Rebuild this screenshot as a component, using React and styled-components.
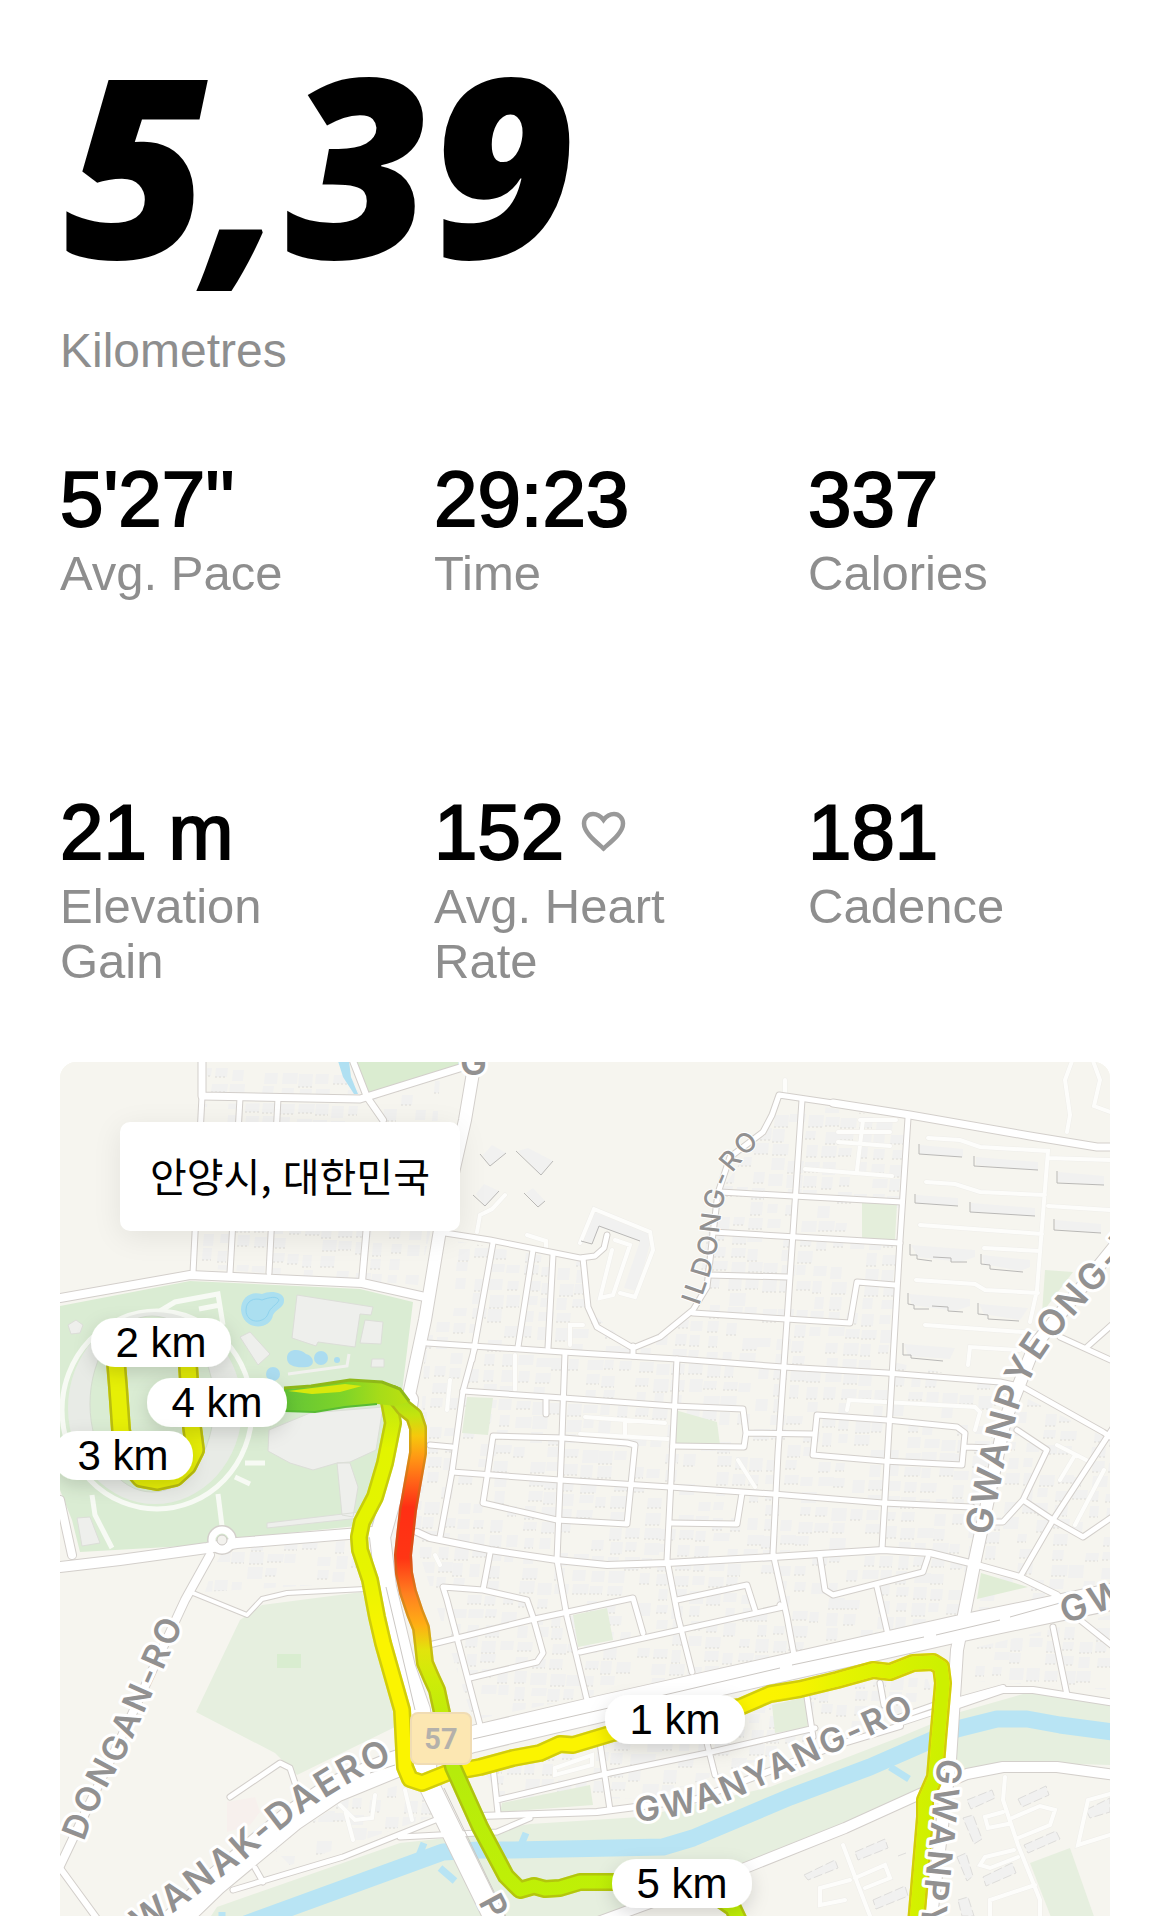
import React from "react";
import styled, { createGlobalStyle } from "styled-components";

const GlobalStyle = createGlobalStyle`
  * { box-sizing: border-box; }
  body {
    margin: 0;
    background: #fff;
    color: #000;
    font-family: "Liberation Sans", Arial, sans-serif;
  }
`;

const Page = styled.main`
  display: flex;
  flex-direction: column;
  padding: 17px 60px 0;
`;

const Hero = styled.section`
  display: flex;
  flex-direction: column;
  gap: 16px;
  margin-bottom: 74px;
`;

const Distance = styled.h1`
  margin: 0;
  padding-left: 4px;
  font: italic 800 250px/290px "Open Sans", sans-serif;
`;

const Label = styled.span`
  font-size: 48px;
  line-height: 55px;
  color: #8e8e8e;
`;

const Stats = styled.dl`
  display: grid;
  grid-template-columns: repeat(3, minmax(0, 1fr));
  column-gap: 72px;
  row-gap: 184px;
  margin: 0 0 73px;
`;

const Stat = styled.div`
  display: flex;
  flex-direction: column-reverse;
  justify-content: flex-end;
`;

const StatLabel = styled(Label)`
  font-size: 49px;
`;

const Value = styled.dd`
  display: flex;
  align-items: center;
  gap: 17px;
  margin: 0;
  font-size: 78px;
  line-height: 94px;
  white-space: pre;
  -webkit-text-stroke: 2px #000;
`;

const MapCard = styled.section`
  position: relative;
  aspect-ratio: 1050 / 854;
  overflow: hidden;
  border-radius: 16px 16px 0 0;
  background: #f6f5ef;
`;

const MapDrawing = styled.svg`
  display: block;
  width: 100%;
  height: 100%;
`;

const Place = styled.p`
  position: absolute;
  top: 60px;
  left: 60px;
  margin: 0;
  padding: 26px 30px 28px;
  border-radius: 10px;
  background: #fff;
  box-shadow: 0 6px 30px rgba(0, 0, 0, 0.08);
  font: 40px/55px "Noto Sans CJK KR", sans-serif;
`;

const RoadName = styled.text`
  font-family: Inter, Roboto, sans-serif;
  font-size: ${(p) => p.$size || 34}px;
  font-weight: ${(p) => p.$weight || 600};
  letter-spacing: 3px;
  fill: #929191;
  stroke: #fff;
  stroke-width: ${(p) => (p.$weight ? 2 : 6)}px;
  stroke-linejoin: round;
  paint-order: stroke;
`;

const PinText = styled.text`
  font-family: "Liberation Sans", Arial, sans-serif;
  font-size: 42px;
  text-anchor: middle;
`;

const ShieldText = styled.text`
  font-family: Roboto, sans-serif;
  font-size: 29px;
  font-weight: 700;
  text-anchor: middle;
  fill: #b4b1ab;
`;

/* Pseudo-random footprint blocks for the residential streets. */
function buildFootprints() {
  let seed = 7;
  const rnd = () => {
    seed = (seed * 16807) % 2147483647;
    return seed / 2147483647;
  };
  let fills = "";
  let edges = "";
  for (let row = 0; row < 56; row += 1) {
    for (let col = 0; col < 66; col += 1) {
      const keep = rnd();
      const w = Math.round(9 + rnd() * 7);
      const h = Math.round(8 + rnd() * 5);
      const x = Math.round(60 + col * 17 + rnd() * 3 - row);
      const y = Math.round(1060 + row * 15 + rnd() * 2 + col * 0.9);
      if (keep > 0.25) {
        fills += `M${x} ${y}h${w}l-1 ${h}h-${w}z`;
        if (keep > 0.5) edges += `M${x - 1} ${y + h}h${w}`;
      }
    }
  }
  return { fills, edges };
}
const footprints = buildFootprints();

const URBAN =
  "M450 1240L580 1262L588 1310L633 1347L693 1315L714 1200L760 1135L780 1100L905 1120L893 1362L1000 1385L1110 1440V1590L473 1720L415 1540L425 1345Z" +
  "M207 1064H345L360 1094H207ZM202 1104L362 1102L440 1075L432 1225L418 1285L200 1268Z" +
  "M212 1570L225 1548L365 1540V1582L205 1592ZM965 1650L1110 1615V1690L960 1680ZM480 1762L925 1672L935 1700L650 1798L500 1800Z" +
  "M275 1850L300 1830L345 1800L400 1785L445 1812L290 1865Z";

const GREENS = [
  ["M354 1061H463V1065L367 1096Z", "#daecd0"],
  ["M60 1306L190 1281L360 1289L413 1302L401 1400L376 1524L240 1538L203 1545L80 1552L72 1520L60 1490Z", "#daecd3"],
  ["M240 1620L262 1605L362 1592L385 1660L395 1727L297 1775L275 1753L196 1712Z", "#e6efdf"],
  ["M277 1654h24v14h-24z", "#d9edd0"],
  ["M467 1397L493 1398L488 1435L462 1433Z", "#e4eedb"],
  ["M675 1410L717 1422L720 1445L675 1443Z", "#e4eedb"],
  ["M862 1203H897L895 1240H862Z", "#e4eedb"],
  ["M1045 1270L1073 1272L1042 1313Z", "#e4eedb"],
  ["M981 1573L1028 1587L977 1599Z", "#e0edd6"],
  ["M573 1615L607 1608L613 1640L578 1647Z", "#e4eedb"],
  ["M772 1705L805 1697L808 1728L775 1733Z", "#e4eedb"],
  ["M502 1803L590 1785L593 1805L500 1812Z", "#e4eedb"],
  ["M205 1925L217 1907L400 1843L447 1838L530 1824L640 1817L770 1787L900 1737L960 1712L1030 1692L1110 1705V1765L1003 1762L920 1790L770 1858L600 1925Z", "#e6efdf"],
  ["M1030 1863L1070 1848L1097 1925H1054Z", "#e6efdf"],
];
const PARK_LAYER = GREENS.slice(0, 4).concat(GREENS.slice(12));
const POCKET_PARKS = GREENS.slice(4, 12);

const GREY_SHAPES =
  "M297 1295L373 1307L371 1315L360 1314L355 1347L318 1342L316 1346L292 1338ZM365 1320L383 1322L381 1344L360 1343Z" +
  "M269 1430L310 1413L383 1407L376 1450L350 1462L337 1463L313 1470L290 1463L268 1451ZM337 1463H350L358 1487L353 1517L342 1515Z" +
  "M267 1523L360 1512V1518L267 1528ZM240 1337L250 1332L270 1354L258 1365ZM372 1359H384V1367H371Z" +
  "M77 1518L90 1517L100 1543L82 1546ZM68 1325L76 1320L83 1325L80 1333L71 1334Z";

const APARTMENTS =
  "M919 1144V1154L962 1157M974 1156V1166L1038 1170M1057 1171V1183L1104 1185M915 1194V1203L958 1206M970 1202V1212L1035 1216M1054 1219V1230L1101 1233" +
  "M910 1244V1255H917V1259L932 1261M933 1257L951 1258V1262H967M981 1254V1264L990 1265V1269L1023 1272M908 1293V1304L914 1305V1309H929M932 1306L948 1307V1311L963 1312M978 1303V1314L988 1315V1319L1019 1321" +
  "M903 1343V1355H911V1358L943 1361M480 1154L490 1166L506 1153M516 1151L541 1175L553 1161M473 1195L485 1206L499 1191M524 1193L538 1207L545 1201M581 1241L592 1244L599 1226L640 1241";

const TOWERS =
  "M967 1800L992 1790L995 1798L971 1809ZM1018 1799L1046 1786L1049 1795L1022 1807ZM963 1818L973 1815L982 1839L974 1844ZM855 1852L885 1839L888 1848L858 1860ZM804 1875L835 1860L838 1868L808 1880Z" +
  "M1024 1845L1056 1831L1060 1839L1028 1853ZM983 1877L1012 1863L1016 1873L986 1886ZM957 1857L966 1853L973 1876L967 1881ZM873 1900L905 1886L908 1896L876 1909ZM898 1856L906 1853M1086 1810L1110 1798V1812L1090 1818ZM958 1900L968 1897L974 1916H962Z";

const APARTMENT_FILLS =
  "M920 1145L963 1149V1157L920 1154ZM976 1157L1038 1162V1170L976 1165ZM1058 1172L1104 1176V1185L1058 1182ZM916 1195L958 1198V1206L916 1203ZM971 1203L1035 1208V1216L971 1212ZM1055 1220L1101 1224V1233L1055 1229Z" +
  "M911 1245L975 1250V1257L960 1262L918 1257ZM982 1255L1030 1260V1267L1020 1271L984 1264ZM909 1294L970 1299V1306L955 1311L912 1305ZM979 1304L1028 1308L1020 1320L984 1314ZM904 1344L955 1348L950 1359L908 1356Z" +
  "M483 1155L492 1145L506 1153L490 1166ZM518 1151L528 1148L553 1161L541 1175ZM476 1194L484 1184L499 1191L485 1206ZM526 1193L533 1188L545 1201L538 1207Z" +
  "M582 1240L594 1212L648 1233L650 1244L637 1291L624 1288L640 1241L600 1227L592 1243Z";

const ALLEYS =
  "M928 1138L960 1140L980 1147L1048 1151L1037 1290L1030 1322M926 1182L955 1184L980 1192L1045 1195M920 1225L1042 1234M984 1248L1040 1251M916 1280L975 1284L985 1290L1038 1293M925 1325L1035 1333M968 1365L970 1347L1020 1350" +
  "M1048 1158L1110 1160M1048 1206L1110 1210M1067 1132L1070 1115L1065 1080L1072 1061M1093 1061L1100 1080L1094 1106L1110 1112M863 1120L857 1170M838 1132H890M838 1142L890 1146M805 1169L892 1176M860 1120H896M785 1080V1095" +
  "M477 1232L480 1215L492 1209L505 1195M527 1235L546 1241V1250M615 1240L630 1245L613 1295L600 1298L612 1250M580 1243L594 1209L650 1232L653 1250L635 1297L620 1293M583 1325H570V1345M847 1410L849 1400L975 1407L980 1412L975 1430M515 1355V1390M450 1380L447 1410M585 1417L665 1423M580 1434L668 1439M625 1420V1436M738 1460L755 1487" +
  "M435 1555L440 1565M340 1805L355 1820L372 1818L375 1795M345 1810L353 1840M405 1790L412 1820M555 1768V1775L592 1765V1755ZM1057 1445L1090 1462M1075 1455L1060 1480M1104 1470L1075 1525M1005 1777L1003 1800L1018 1845L1040 1900V1916M1018 1838L1050 1825L1055 1810L1040 1806L1012 1818M1003 1812L985 1817L988 1828L1008 1824M1014 1850L985 1857L980 1865L990 1868L1018 1857M1110 1794L1088 1800L1078 1845L1110 1835" +
  "M843 1845L860 1890L870 1916M855 1878L885 1865L890 1878L865 1888M850 1880L820 1888V1905L845 1900M1035 1885L990 1900V1916";

/* Each road: [width, path]. */
const ROADS = [
  [5, "M202 1096L193 1273M240 1098L230 1273M278 1098L269 1273"],
  [6, "M353 1061L367 1097L383 1120M367 1225L362 1282"],
  [7, "M202 1055V1096L360 1099L463 1067L470 1061"],
  [8, "M60 1298L190 1275L362 1283L425 1297"],
  [5, "M493 1243L472 1360M475 1347L463 1391L452 1472L440 1537M533 1250L518 1347M553 1255L548 1348"],
  [5, "M583 1258L588 1307L597 1327L633 1348L660 1337L693 1310L707 1287L713 1233L718 1193L730 1157L763 1132L772 1115L779 1095L833 1103M633 1346V1356"],
  [5, "M445 1233L490 1240L580 1258L595 1256L604 1248L607 1235"],
  [7, "M833 1103L910 1115L1030 1136L1097 1147H1115"],
  [5, "M720 1192L902 1202M713 1232L900 1243M709 1275L787 1277M693 1313L850 1323L857 1282L895 1285"],
  [5, "M427 1343L563 1352L677 1359L783 1367L887 1373L1000 1382L1023 1387L1103 1432L1115 1440"],
  [5, "M463 1391L563 1398L673 1406L743 1409L746 1433L744 1447L673 1446M746 1433L813 1434"],
  [5, "M817 1415L887 1420L957 1427L965 1433L962 1465L883 1461L813 1455ZM966 1447L990 1448"],
  [5, "M483 1503L557 1520L627 1524L635 1445L627 1443L563 1438L493 1436L487 1477ZM546 1400V1414"],
  [5, "M430 1445L452 1447M452 1472L560 1480L670 1487L773 1494L883 1503L972 1507M742 1493L737 1524L670 1523"],
  [5, "M565 1353L562 1437L557 1560L567 1617L587 1700M677 1359L667 1560L678 1617L692 1672"],
  [5, "M802 1100L793 1233L778 1453L773 1553L787 1617L794 1655M908 1118L900 1240L893 1360L882 1549"],
  [6, "M417 1532L430 1538L490 1550L557 1560L607 1565L667 1563L773 1557L883 1550L930 1553L970 1563L1020 1577L1057 1595"],
  [5, "M490 1553L483 1590M480 1725L447 1600L443 1587L483 1590L527 1600L533 1617L543 1653L537 1662L470 1678"],
  [5, "M425 1646L530 1620L563 1613L633 1598L643 1633M580 1652L680 1630L783 1607L780 1605M677 1600L747 1585L755 1610"],
  [5, "M820 1557L825 1590L833 1595L923 1572L928 1557M877 1587L888 1635"],
  [5, "M1115 1425L1053 1520L1020 1577M1023 1500L1053 1520L1083 1537L1115 1515M1017 1430L1047 1450L1023 1500L1003 1522H990M1060 1337L1115 1362M1087 1347L1115 1322"],
  [5, "M1053 1627L1067 1695M1080 1620L1115 1648"],
  [6, "M950 1708L1003 1690L1033 1690L1115 1703M960 1700L1003 1688"],
  [5, "M897 1724L955 1705M897 1718L940 1703"],
  [6, "M480 1816L597 1812L697 1799L837 1745L900 1726"],
  [5, "M493 1767L498 1813M497 1800L610 1773L707 1753L815 1728M600 1743L610 1810M707 1743L715 1775M807 1697L813 1737M880 1683L884 1705"],
  [5, "M233 1890L343 1857L443 1817M400 1837L497 1832L530 1818M255 1868L263 1882"],
  [5, "M230 1797L280 1763L290 1768L298 1792"],
  [6, "M60 1868L98 1920"],
  [10, "M60 1567L120 1560L207 1548L237 1543L385 1531"],
  [8, "M60 1500L72 1555M210 1555L185 1600L120 1740L58 1870"],
  [4, "M193 1593L247 1615L262 1599L287 1593L365 1589"],
  [10, "M590 1925L740 1870L845 1828L920 1794L967 1774L1003 1767H1057L1115 1775"],
  [12, "M476 1055L465 1120L440 1230L425 1320L408 1400L395 1487"],
  [20, "M408 1400L394 1487L380 1537L386 1587L405 1667L420 1710L428 1783L500 1930"],
  [12, "M1120 1240L1035 1345L1005 1420L975 1560L957 1650L950 1760L930 1925"],
  [26, "M160 1935L215 1882L292 1818L335 1789L396 1764L473 1739L600 1709L770 1671L957 1629L1120 1595"],
];

const ROUTE_OUT =
  "M310 1401L343 1395L377 1391L393 1394L404 1408L414 1416L418 1428V1453L412 1487L408 1510L405 1537L403 1555L404 1573L408 1592L415 1613L421 1628L423 1645L425 1663L431 1677L437 1690L442 1713L453 1767L480 1827L506 1876L520 1890L534 1886L545 1889L560 1888L580 1882L613 1882L700 1885L733 1908L748 1940";
const ROUTE_BACK =
  "M388 1396L393 1423L385 1463L375 1497L362 1522L359 1537L360 1550L370 1580L377 1617L383 1643L402 1710L405 1767L410 1779L422 1783L447 1773L480 1767L513 1758L540 1753L560 1744L573 1745L613 1733L680 1716L740 1707L770 1694L800 1689L837 1680L873 1670L890 1672L913 1663L933 1662L941 1667L943 1683L938 1740L935 1777L925 1800L925 1817L918 1900L915 1935";
const ROUTE_TRACK = "M115 1350L118 1387L121 1430L128 1463L141 1478L157 1481L175 1477L187 1466L195 1450L192 1427L187 1350";

const PINS = [
  ["1 km", 675, 1719],
  ["5 km", 682, 1883],
  ["2 km", 161, 1342],
  ["4 km", 217, 1402],
  ["3 km", 123, 1455],
];

const STATS = [
  ["5'27''", "Avg. Pace"],
  ["29:23", "Time"],
  ["337", "Calories"],
  ["21 m", "Elevation Gain"],
  ["152", "Avg. Heart Rate", true],
  ["181", "Cadence"],
];

function Heart() {
  return (
    <svg width="45" height="42" viewBox="0 0 45 42" fill="none" stroke="#999" strokeWidth="4.5" strokeLinejoin="miter" aria-hidden="true">
      <path d="M22.500 37.500C16 31.500 3 22 3 12.500C3 7 7 3 12 3C16.500 3 19.500 5 22.500 9C25.500 5 28.500 3 33 3C38 3 42 7 42 12.500C42 22 29 31.500 22.500 37.500Z" />
    </svg>
  );
}

function Route({ d, paint, edge, width = 18 }) {
  return (
    <g fill="none" strokeLinejoin="round">
      <path d={d} stroke={paint} strokeWidth={width} />
      <path d={d} stroke={edge} strokeWidth={width} />
      <path d={d} stroke={paint} strokeWidth={width - 5} />
    </g>
  );
}

function RouteMap() {
  return (
    <MapDrawing viewBox="60 1062 1050 854" preserveAspectRatio="xMidYMid slice" role="img" aria-label="Route map">
      <defs>
        <clipPath id="urban"><path d={URBAN} /></clipPath>
        <linearGradient id="out" gradientUnits="userSpaceOnUse" x1="0" y1="1390" x2="0" y2="1900">
          <stop offset="0" stopColor="#9ade1c" />
          <stop offset="0.05" stopColor="#c4e40e" />
          <stop offset="0.09" stopColor="#f6c80c" />
          <stop offset="0.13" stopColor="#ff9a14" />
          <stop offset="0.18" stopColor="#ff6318" />
          <stop offset="0.23" stopColor="#ff2f14" />
          <stop offset="0.33" stopColor="#ff3514" />
          <stop offset="0.4" stopColor="#ff8020" />
          <stop offset="0.46" stopColor="#ffae14" />
          <stop offset="0.51" stopColor="#e2e40c" />
          <stop offset="0.57" stopColor="#cdec08" />
          <stop offset="0.7" stopColor="#b4ea0c" />
          <stop offset="1" stopColor="#c0f006" />
        </linearGradient>
        <linearGradient id="start" gradientUnits="userSpaceOnUse" x1="285" y1="0" x2="405" y2="0">
          <stop offset="0" stopColor="#63c536" />
          <stop offset="0.5" stopColor="#80d428" />
          <stop offset="0.8" stopColor="#a8dc18" />
          <stop offset="1" stopColor="#b8e010" />
        </linearGradient>
        <linearGradient id="back" gradientUnits="userSpaceOnUse" x1="0" y1="1400" x2="0" y2="1640">
          <stop offset="0" stopColor="#c0e810" />
          <stop offset="0.2" stopColor="#e2f400" />
          <stop offset="0.7" stopColor="#e6f400" />
          <stop offset="1" stopColor="#fbf400" />
        </linearGradient>
        <linearGradient id="east" gradientUnits="userSpaceOnUse" x1="760" y1="0" x2="940" y2="0">
          <stop offset="0" stopColor="#fff200" stopOpacity="0" />
          <stop offset="0.4" stopColor="#e8f400" />
          <stop offset="1" stopColor="#cdf000" />
        </linearGradient>
        <filter id="lift" x="-30%" y="-60%" width="160%" height="240%">
          <feDropShadow dx="0" dy="6" stdDeviation="9" floodOpacity="0.14" />
        </filter>
      </defs>

      <rect x="60" y="1062" width="1050" height="856" fill="#f6f5ef" />
      {PARK_LAYER.map(([d, fill]) => <path key={d} d={d} fill={fill} />)}

      <g clipPath="url(#urban)">
        <path d={footprints.fills} fill="#f1f1f0" />
        <path d={footprints.edges} fill="none" stroke="#dddcd8" strokeDasharray="2 2" />
      </g>
      {POCKET_PARKS.map(([d, fill]) => <path key={d} d={d} fill={fill} />)}
      <path d="M227 1802L255 1797L260 1812L250 1825L227 1832Z" fill="#f7f0ed" />

      <g fill="none" stroke="#f7faf4" strokeWidth="5">
        <ellipse cx="157" cy="1410" rx="95" ry="99" />
        <path d="M160 1311L175 1302L218 1294L223 1325M199 1309L220 1305M92 1495L95 1515L112 1548M218 1494L222 1526M245 1463H265M235 1477L250 1484" />
      </g>
      <ellipse cx="155" cy="1408" rx="87" ry="96" fill="#e8ebe6" />
      <ellipse cx="152" cy="1404" rx="62" ry="88" fill="#daecd3" stroke="#d4dccf" />
      <path d={GREY_SHAPES} fill="#eeefec" stroke="#dcded8" strokeWidth="1" />
      <path d="M288 1374L347 1366L349 1354" fill="none" stroke="#f1f1ee" strokeWidth="3" />

      <path d="M338 1061H349L351 1077L358 1094H354L343 1077Z" fill="#b0e0f2" />
      <path d="M241 1310C241 1296 252 1291 262 1294C270 1290 283 1292 284 1299C285 1308 276 1309 273 1315C271 1330 243 1332 241 1310Z" fill="#abdff0" />
      <path d="M246 1310C246 1301 254 1297 262 1300C270 1297 277 1296 279 1300C277 1305 270 1307 268 1314C264 1324 246 1324 246 1310Z" fill="none" stroke="#8fd3ee" />
      <path d="M287 1358C287 1348 300 1348 306 1354C314 1356 316 1366 307 1367C298 1368 287 1367 287 1358Z" fill="#abdcf0" />
      <circle cx="321" cy="1358" r="7" fill="#abdcf0" />
      <circle cx="337" cy="1360" r="3" fill="#abdcf0" />
      <circle cx="273" cy="1374" r="7" fill="#abdcf0" />
      <g fill="none" stroke="#b8e4f4" strokeLinejoin="round">
        <path d="M240 1926L443 1852L480 1850L513 1850L663 1847L693 1838L790 1797L870 1767L957 1729L997 1719H1027L1060 1725L1120 1733" strokeWidth="17" />
        <path d="M418 1858L424 1843M440 1868L455 1881M521 1845L526 1833M890 1767L909 1779M222 1912V1920" strokeWidth="7" />
      </g>

      <path d={APARTMENT_FILLS} fill="#f1f1f0" />
      <path d={TOWERS} fill="#f1f1f0" stroke="#dedddb" strokeDasharray="9 3" />
      <path d={ALLEYS} fill="none" stroke="#efeeea" strokeWidth="5" strokeLinecap="round" />
      <path d={ALLEYS} fill="none" stroke="#fdfdfb" strokeWidth="4" strokeLinecap="round" />
      <path d={APARTMENTS} fill="none" stroke="#b9b8b6" />

      <g fill="none" stroke="#d3cfcb" strokeLinejoin="round" strokeLinecap="round">
        {ROADS.map(([w, d]) => <path key={d} d={d} strokeWidth={w + 2} />)}
        <circle cx="222" cy="1540" r="11" strokeWidth="8" />
      </g>
      <g fill="none" stroke="#fff" strokeLinejoin="round" strokeLinecap="round">
        {ROADS.map(([w, d]) => <path key={d} d={d} strokeWidth={w} />)}
        <circle cx="222" cy="1540" r="10" strokeWidth="7" />
      </g>
      <g fill="none" stroke="#cbc7c3">
        <circle cx="222" cy="1540" r="5" fill="#f3f2ee" />
        <path d="M473 1739L600 1710L780 1668M792 1665L924 1637M936 1635L1000 1620M1010 1617L1060 1603M395 1765L370 1773M444 1788L510 1925M386 1587L415 1710" />
      </g>

      <Route d={ROUTE_TRACK} paint="#e6ef06" edge="#b9bd10" width={20} />
      <Route d={ROUTE_BACK} paint="url(#back)" edge="#a9a51480" />
      <path d="M760 1698L800 1689L837 1680L873 1670L890 1672L913 1663L933 1662L941 1667L943 1683L938 1740L935 1777L925 1800L925 1817L918 1900L915 1935" fill="none" stroke="url(#east)" strokeWidth="13" strokeLinejoin="round" />
      <Route d={ROUTE_OUT} paint="url(#out)" edge="#a0801860" />
      <path d="M284 1389L311 1387L350 1380L382 1382L400 1390L408 1402L396 1406L377 1404L345 1407L315 1412L284 1411Z" fill="url(#start)" />
      <path d="M284 1388L311 1386L350 1380L382 1382L400 1389L409 1401" fill="none" stroke="#8fb818" strokeWidth="3" />
      <path d="M284 1411L315 1412L345 1407L377 1404" fill="none" stroke="#58bb34" strokeWidth="2" />
      <path d="M288 1391L312 1388L345 1384L362 1386L340 1392L312 1394Z" fill="#d8e80c" />

      <rect x="411" y="1713" width="60" height="51" rx="7" fill="#fce7b2" stroke="#f0dcb4" strokeWidth="2" />
      <ShieldText x="441" y="1749">57</ShieldText>

      <path id="ildong" d="M699 1306C706 1285 716 1262 719 1234C722 1200 728 1178 739 1165C747 1152 762 1142 790 1115" fill="none" />
      <path id="gwanpyeong" d="M990 1536L1005 1462C1015 1420 1022 1390 1038 1365C1050 1340 1090 1298 1160 1220" fill="none" />
      <path id="gw" d="M1065 1624L1170 1588" fill="none" />
      <path id="dongan" d="M84 1842C95 1810 110 1780 125 1756L194 1600" fill="none" />
      <path id="gwanak" d="M62 1990L165 1919L251 1855C290 1820 330 1790 396 1760" fill="none" />
      <path id="gwanyang" d="M636 1822C680 1818 720 1806 757 1788L940 1704" fill="none" />
      <path id="south" d="M938 1758L915 1980" fill="none" />
      <path id="bridge" d="M478 1902L530 2000" fill="none" />
      <RoadName $size={27} $weight={500}><textPath href="#ildong">ILDONG-RO</textPath></RoadName>
      <RoadName $size={36}><textPath href="#gwanpyeong">GWANPYEONG-RO</textPath></RoadName>
      <RoadName $size={36}><textPath href="#gw">GWANAK</textPath></RoadName>
      <RoadName><textPath href="#dongan">DONGAN-RO</textPath></RoadName>
      <RoadName $size={36} textAnchor="end"><textPath href="#gwanak" startOffset="100%">GWANAK-DAERO</textPath></RoadName>
      <RoadName><textPath href="#gwanyang">GWANYANG-RO</textPath></RoadName>
      <RoadName><textPath href="#south">GWANPYEONG</textPath></RoadName>
      <RoadName><textPath href="#bridge">P</textPath></RoadName>
      <RoadName $size={36} x="460" y="1075">G</RoadName>

      {PINS.map(([text, x, y]) => (
        <g key={text}>
          <rect x={x - 70} y={y - 24} width="140" height="49" rx="24" fill="#fff" filter="url(#lift)" />
          <PinText x={x} y={y + 15}>{text}</PinText>
        </g>
      ))}
    </MapDrawing>
  );
}

export default function App() {
  return (
    <>
      <GlobalStyle />
      <Page>
        <Hero>
          <Distance>5,39</Distance>
          <Label>Kilometres</Label>
        </Hero>
        <Stats>
          {STATS.map(([value, label, heart]) => (
            <Stat key={label}>
              <StatLabel as="dt">{label}</StatLabel>
              <Value>{value}{heart && <Heart />}</Value>
            </Stat>
          ))}
        </Stats>
        <MapCard>
          <RouteMap />
          <Place lang="ko">안양시, 대한민국</Place>
        </MapCard>
      </Page>
    </>
  );
}
